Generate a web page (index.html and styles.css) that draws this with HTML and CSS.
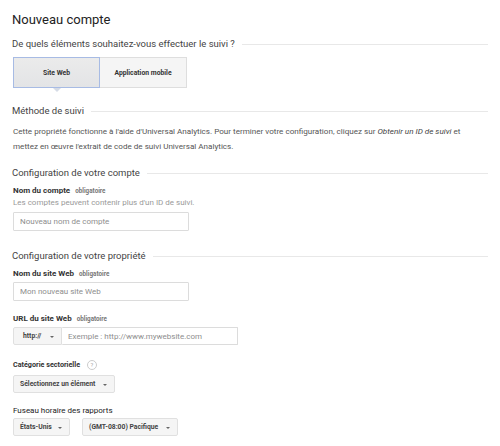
FILE: index.html
```html
<!DOCTYPE html>
<html lang="fr">
<head>
<meta charset="utf-8"/>
<title>Nouveau compte</title>
<link rel="stylesheet" href="styles.css">
</head>
<body>
  <h1>Nouveau compte</h1>
  <h2 class="section-title main">De quels éléments souhaitez-vous effectuer le suivi ?</h2>
  <div class="tabs">
    <button class="tab selected">Site Web</button>
    <button class="tab">Application mobile</button>
  </div>

  <h3 class="section-title method">Méthode de suivi</h3>
  <p class="intro">Cette propriété fonctionne à l'aide d'Universal Analytics. Pour terminer votre configuration, cliquez sur <em>Obtenir un ID de suivi</em> et<br>mettez en œuvre l'extrait de code de suivi Universal Analytics.</p>

  <h3 class="section-title account">Configuration de votre compte</h3>
  <label class="field-label first">Nom du compte <span class="req">obligatoire</span></label>
  <p class="hint">Les comptes peuvent contenir plus d'un ID de suivi.</p>
  <input class="text-input account-input" type="text" placeholder="Nouveau nom de compte">

  <h3 class="section-title property">Configuration de votre propriété</h3>
  <label class="field-label first">Nom du site Web <span class="req">obligatoire</span></label>
  <input class="text-input site-input" type="text" placeholder="Mon nouveau site Web">

  <label class="field-label">URL du site Web <span class="req">obligatoire</span></label>
  <div class="url-group">
    <div class="select proto">http://</div>
    <input class="text-input url-input" type="text" placeholder="Exemple : http://www.mywebsite.com">
  </div>

  <label class="field-label small">Catégorie sectorielle <span class="help">?</span></label>
  <div class="select-row">
    <div class="select category">Sélectionnez un élément</div>
  </div>

  <label class="field-label plain">Fuseau horaire des rapports</label>
  <div class="select-row">
    <div class="select country">États-Unis</div>
    <div class="select zone">(GMT-08:00) Pacifique</div>
  </div>
</body>
</html>
```

FILE: styles.css
```css
body {
  margin: 0;
  padding: 12px 12px 0 13px;
  font-family: Roboto, "Liberation Sans", Arial, sans-serif;
  color: #333;
  background: #fff;
}
h1 {
  margin: 0 0 0 -1px;
  font-size: 13px;
  line-height: 16px;
  font-weight: 400;
  color: #222;
}
.section-title {
  display: flex;
  align-items: center;
  margin: 0 0 0 -1px;
  font-size: 9.5px;
  line-height: 12px;
  font-weight: 400;
  white-space: nowrap;
  color: #444;
}
.section-title::after {
  content: "";
  flex: 1;
  height: 1px;
  background: #e8e8e8;
  margin-left: 7px;
}
.section-title.main { margin-top: 10px; }
.section-title.method { margin-top: 17px; }
.section-title.account { margin-top: 13px; }
.section-title.property { margin-top: 19px; }

.tabs {
  display: flex;
  margin-top: 7px;
}
.tab {
  position: relative;
  width: 87px;
  height: 31px;
  padding: 0;
  border: 1px solid #dedede;
  background: #f5f5f5;
  font-family: inherit;
  font-size: 6.8px;
  font-weight: 700;
  color: #333;
}
.tab + .tab { border-left: none; }
.tab.selected {
  background: linear-gradient(#ebebeb, #e3e4e6);
  border-color: #a7bbe4;
}
.tab.selected::after {
  content: "";
  position: absolute;
  left: 39px;
  bottom: -5px;
  border-left: 4px solid transparent;
  border-right: 4px solid transparent;
  border-top: 4px solid #d5dbe6;
}

.intro {
  margin: 7px 0 0;
  font-size: 8.1px;
  line-height: 15px;
  color: #555;
}
.intro em { color: #444; }

.field-label {
  display: block;
  margin-top: 12px;
  font-size: 8px;
  line-height: 11px;
  font-weight: 700;
  color: #333;
}
.field-label.first { margin-top: 6px; }
.field-label.small { font-size: 7.2px; margin-top: 14px; }
.field-label.plain { font-weight: 400; color: #222; }
.req {
  margin-left: 3px;
  font-size: 6.3px;
  line-height: 0;
  font-weight: 700;
  color: #777;
}
.help {
  display: inline-block;
  width: 8px;
  height: 8px;
  margin: -3px 0 -3px 5px;
  border: 1px solid #ccc;
  border-radius: 50%;
  font-size: 6px;
  line-height: 8px;
  text-align: center;
  font-weight: 400;
  color: #aaa;
  vertical-align: middle;
}
.hint {
  margin: 1px 0 0;
  font-size: 8px;
  line-height: 11px;
  color: #999;
}

.text-input {
  display: block;
  box-sizing: border-box;
  height: 19px;
  padding: 0 6px;
  border: 1px solid #dcdcdc;
  border-radius: 1px;
  font-family: inherit;
  font-size: 8px;
  color: #333;
  outline: none;
}
.text-input::placeholder { color: #8e8e8e; }
.account-input { width: 176px; margin-top: 4px; }
.site-input { width: 176px; margin-top: 3px; }

.url-group {
  display: flex;
  margin-top: 3px;
  height: 18px;
}
.url-input {
  width: 176px;
  height: 18px;
  border-left: none;
}

.select-row {
  display: flex;
  gap: 12px;
  margin-top: 5px;
}
.select-row:last-child { margin-top: 2px; }
.select {
  position: relative;
  box-sizing: border-box;
  height: 18px;
  padding: 0 6px;
  border: 1px solid #e0e0e0;
  border-radius: 2px;
  background: #f5f5f5;
  font-size: 6.8px;
  font-weight: 700;
  line-height: 16px;
  color: #444;
}
.select::after {
  content: "";
  position: absolute;
  right: 7px;
  top: 8px;
  border-left: 2px solid transparent;
  border-right: 2px solid transparent;
  border-top: 2px solid #666;
}
.select.proto { width: 49px; padding-left: 9px; border-radius: 2px 0 0 2px; }
.select.category { width: 102px; }
.select.country { width: 57px; }
.select.zone { width: 96px; }
```
